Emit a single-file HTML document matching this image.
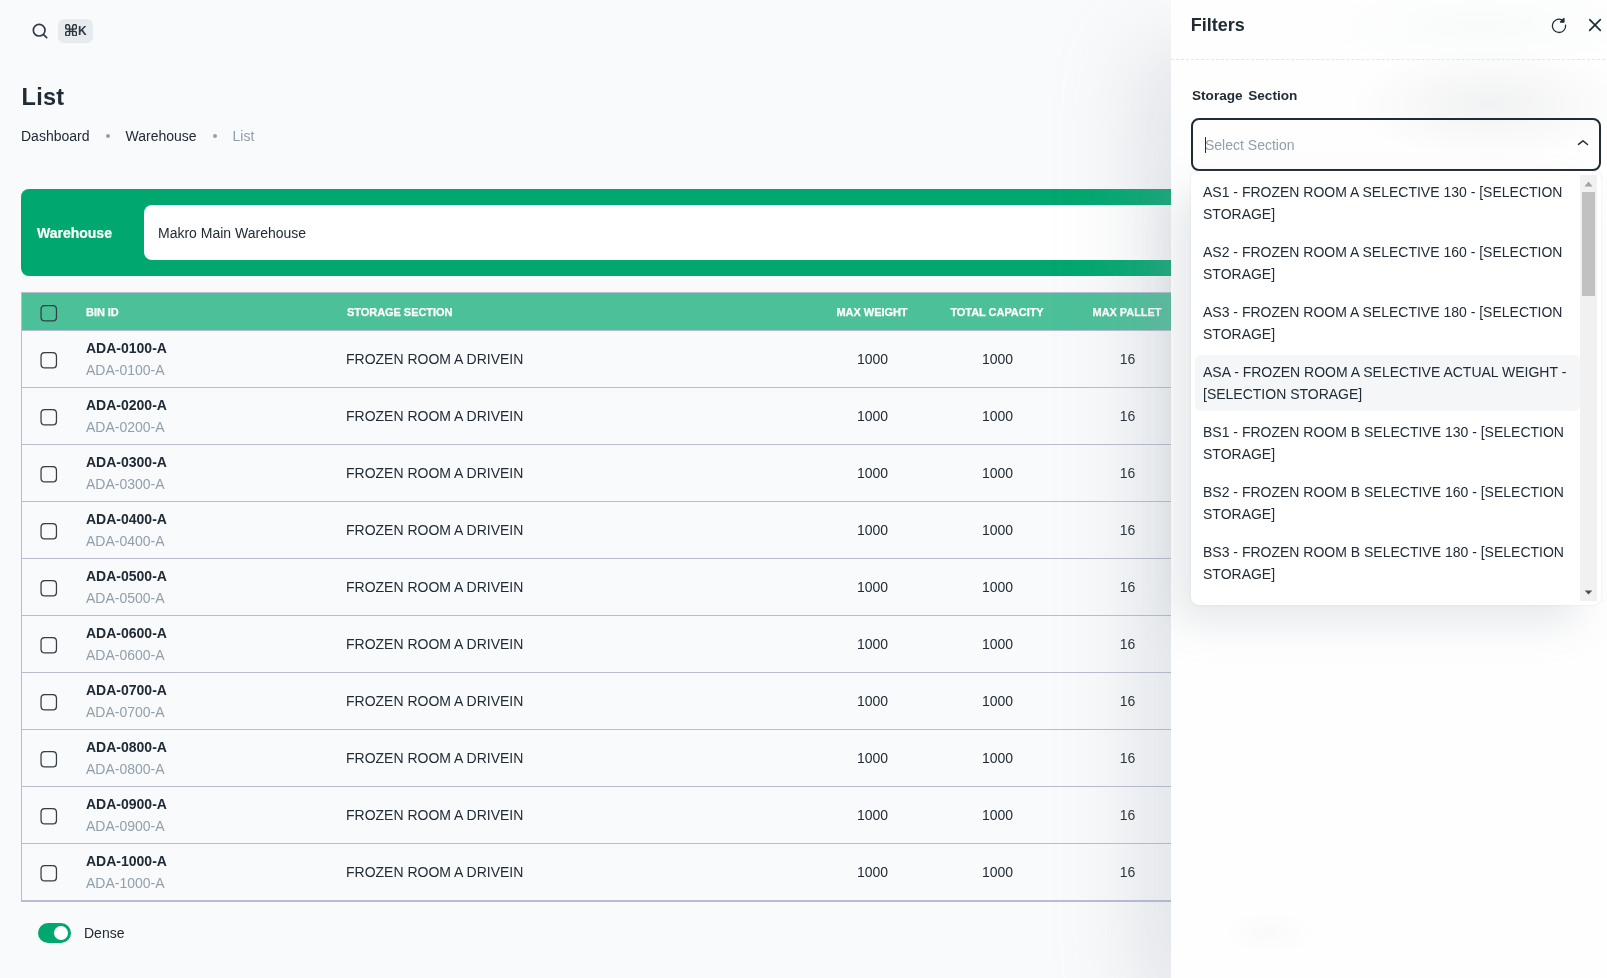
<!DOCTYPE html>
<html lang="en"><head><meta charset="utf-8"><title>List</title>
<style>
*{box-sizing:border-box;margin:0;padding:0}
html,body{width:1607px;height:978px;overflow:hidden}
body{position:relative;background:#F9FAFB;font-family:"Liberation Sans",sans-serif;font-size:14px;color:#212B36;-webkit-font-smoothing:antialiased}
#root{position:absolute;left:0;top:0;width:1607px;height:978px;overflow:hidden;will-change:transform}
.abs,.t{position:absolute;white-space:nowrap}
.t{line-height:22px;height:22px}
/* top bar */
.search{position:absolute;left:30px;top:21px;width:20px;height:20px;fill:#2F3944}
.kbd{position:absolute;left:58px;top:19px;width:35px;height:24px;border-radius:6px;background:#E8EBEE}
.kbd svg{position:absolute;left:6.8px;top:4.9px;width:12.2px;height:12.5px}
.kbd span{position:absolute;left:20px;top:0;line-height:24px;font-size:12px;font-weight:700;color:#2F3944}
h1{position:absolute;left:21.6px;top:79.2px;letter-spacing:0.22px;font-size:23.5px;line-height:36px;font-weight:700;color:#212B36}
.bc{top:125px;color:#212B36}
.dot{position:absolute;top:134px;width:4px;height:4px;border-radius:50%;background:#919EAB}
/* green bar */
.gbar{position:absolute;left:21px;top:189px;width:1400px;height:87px;border-radius:8px;background:#00A76F}
.gbar .lbl{position:absolute;left:16px;top:33px;line-height:22px;font-weight:700;color:#fff;-webkit-text-stroke:0.2px #fff}
.gbar .inp{position:absolute;left:123px;top:16px;width:1300px;height:55px;border-radius:8px;background:#fff}
.gbar .inp span{position:absolute;left:14px;top:17px;line-height:22px;color:#212B36}
/* table */
.tbl{position:absolute;left:21px;top:292px;width:1400px;height:610px;border:1px solid #BABDD2;border-right:0}
.thead{position:absolute;left:22px;top:293px;width:1400px;height:37px;background:#4BC099}
.hline{position:absolute;left:22px;width:1400px;height:1px;background:#BABDD2}
.th{position:absolute;top:301px;line-height:22px;font-size:11px;font-weight:700;color:#fff;white-space:nowrap;-webkit-text-stroke:0.25px #fff;letter-spacing:-0.05px}
.row{position:absolute;left:0;width:1400px;height:57px}
.row::after{content:"";position:absolute;left:22px;right:0;bottom:0;height:1px;background:#BABDD2}
.cb{position:absolute;left:38px;width:20px;height:20px;fill:#353D47}
.row .cb{top:19px}
.b1{left:86px;top:6px;font-weight:700}
.b2{left:86px;top:28px;color:#919EAB}
.sec{left:346px;top:17px}
.n{top:17px;width:100px;text-align:center}
.n1{left:822.5px}.n2{left:947.5px}.n3{left:1077.5px}
/* dense */
.sw{position:absolute;left:38px;top:923px;width:33px;height:20px;border-radius:10px;background:#00A76F}
.sw i{position:absolute;left:16px;top:3px;width:14px;height:14px;border-radius:50%;background:#fff}
.dense{left:84px;top:922px}
/* drawer */
.drawer{position:absolute;left:1171px;top:0;width:449px;height:978px;background:#FEFEFE;box-shadow:-40px 40px 80px -8px rgba(145,158,171,0.24);
 background-image:radial-gradient(ellipse 140px 56px at 320px 104px, rgba(110,120,130,0.09), rgba(110,120,130,0.06) 35%, rgba(110,120,130,0) 100%),radial-gradient(ellipse 160px 45px at 310px 26px, rgba(120,170,170,0.04), rgba(120,170,170,0) 100%),radial-gradient(ellipse 45px 22px at 99px 933px, rgba(110,120,130,0.03), rgba(110,120,130,0) 100%)}
.drawer h6{position:absolute;left:19.8px;top:11px;font-size:18px;line-height:28px;font-weight:700;color:#212B36}
.dash{position:absolute;left:0;top:59px;width:449px;height:0;border-top:1px dashed #E3E7EA}
.ico{position:absolute;fill:none;stroke:#27303A;stroke-linecap:round;stroke-linejoin:round}
.icf{position:absolute;fill:#212B36}
.sslab{left:21px;top:84.5px;font-weight:700;font-size:13.6px;word-spacing:1.8px}
.sel{position:absolute;left:20px;top:118px;width:410px;height:53px;border:2px solid #212B36;border-radius:8px}
.caret{position:absolute;left:34px;top:137px;width:1px;height:16px;background:#212B36}
.ph{left:34px;top:134px;color:#919EAB}
.paper{position:absolute;left:20px;top:171px;width:410px;height:434px;border-radius:8px;background:#fff;
 box-shadow:0 0 2px 0 rgba(145,158,171,0.24),-20px 20px 40px -4px rgba(145,158,171,0.24)}
.lb{position:absolute;left:4px;top:4px;width:385px;height:426px;overflow:hidden}
.opt{position:absolute;left:0;width:385px;height:56px;padding:6px 8px;border-radius:6px;line-height:22px;white-space:nowrap;color:#212B36}
.opt.hov{background:#F4F6F8}
.sb{position:absolute;left:389px;top:4px;width:17px;height:426px;background:#F1F1F1}
.sb .th2{position:absolute;left:2px;top:17px;width:13px;height:104px;background:#C1C1C1}
.sb svg{position:absolute;left:0;width:17px;height:17px}
</style></head><body><div id="root">
<svg class="search" viewBox="0 0 24 24"><path d="m20.71 19.29l-3.4-3.39A7.92 7.92 0 0 0 19 11a8 8 0 1 0-8 8a7.92 7.92 0 0 0 4.9-1.69l3.39 3.4a1 1 0 0 0 1.42 0a1 1 0 0 0 0-1.42ZM5 11a6 6 0 1 1 6 6a6 6 0 0 1-6-6Z"/></svg>
<div class="kbd"><svg viewBox="0 0 12.2 12.5" fill="none" stroke="#2A343E" stroke-width="1.45"><path d="M4.6 2.85a2 2.25 0 1 0-2 2.25H9.6a2 2.25 0 1 0-2-2.25V9.65a2 2.25 0 1 0 2-2.25H2.6a2 2.25 0 1 0 2 2.25Z"/></svg><span>K</span></div>
<h1>List</h1>
<div class="t bc" style="left:21px">Dashboard</div><i class="dot" style="left:106px"></i>
<div class="t bc" style="left:125.5px">Warehouse</div><i class="dot" style="left:213px"></i>
<div class="t bc" style="left:232.5px;color:#919EAB">List</div>

<div class="gbar"><div class="lbl">Warehouse</div><div class="inp"><span>Makro Main Warehouse</span></div></div>

<div class="tbl"></div>
<div class="thead"></div>
<div class="hline" style="top:330px"></div>
<svg class="cb" style="top:303px" viewBox="0 0 24 24"><path d="M17.9 2.318A5 5 0 0 1 22.895 7.1l.005.217v10a5 5 0 0 1-4.783 4.995l-.217.005h-10a5 5 0 0 1-4.995-4.783l-.005-.217v-10a5 5 0 0 1 4.783-4.996l.217-.004h10Zm-.5 1.5h-9a4 4 0 0 0-4 4v9a4 4 0 0 0 4 4h9a4 4 0 0 0 4-4v-9a4 4 0 0 0-4-4Z"/></svg>
<div class="th" style="left:86px">BIN ID</div>
<div class="th" style="left:347px">STORAGE SECTION</div>
<div class="th" style="left:822px;width:100px;text-align:center">MAX WEIGHT</div>
<div class="th" style="left:947px;width:100px;text-align:center">TOTAL CAPACITY</div>
<div class="th" style="left:1077px;width:100px;text-align:center">MAX PALLET</div>
<div class="row" style="top:331px">
<svg class="cb" viewBox="0 0 24 24"><path d="M17.9 2.318A5 5 0 0 1 22.895 7.1l.005.217v10a5 5 0 0 1-4.783 4.995l-.217.005h-10a5 5 0 0 1-4.995-4.783l-.005-.217v-10a5 5 0 0 1 4.783-4.996l.217-.004h10Zm-.5 1.5h-9a4 4 0 0 0-4 4v9a4 4 0 0 0 4 4h9a4 4 0 0 0 4-4v-9a4 4 0 0 0-4-4Z"/></svg>
<div class="t b1">ADA-0100-A</div><div class="t b2">ADA-0100-A</div>
<div class="t sec">FROZEN ROOM A DRIVEIN</div>
<div class="t n n1">1000</div><div class="t n n2">1000</div><div class="t n n3">16</div>
</div>
<div class="row" style="top:388px">
<svg class="cb" viewBox="0 0 24 24"><path d="M17.9 2.318A5 5 0 0 1 22.895 7.1l.005.217v10a5 5 0 0 1-4.783 4.995l-.217.005h-10a5 5 0 0 1-4.995-4.783l-.005-.217v-10a5 5 0 0 1 4.783-4.996l.217-.004h10Zm-.5 1.5h-9a4 4 0 0 0-4 4v9a4 4 0 0 0 4 4h9a4 4 0 0 0 4-4v-9a4 4 0 0 0-4-4Z"/></svg>
<div class="t b1">ADA-0200-A</div><div class="t b2">ADA-0200-A</div>
<div class="t sec">FROZEN ROOM A DRIVEIN</div>
<div class="t n n1">1000</div><div class="t n n2">1000</div><div class="t n n3">16</div>
</div>
<div class="row" style="top:445px">
<svg class="cb" viewBox="0 0 24 24"><path d="M17.9 2.318A5 5 0 0 1 22.895 7.1l.005.217v10a5 5 0 0 1-4.783 4.995l-.217.005h-10a5 5 0 0 1-4.995-4.783l-.005-.217v-10a5 5 0 0 1 4.783-4.996l.217-.004h10Zm-.5 1.5h-9a4 4 0 0 0-4 4v9a4 4 0 0 0 4 4h9a4 4 0 0 0 4-4v-9a4 4 0 0 0-4-4Z"/></svg>
<div class="t b1">ADA-0300-A</div><div class="t b2">ADA-0300-A</div>
<div class="t sec">FROZEN ROOM A DRIVEIN</div>
<div class="t n n1">1000</div><div class="t n n2">1000</div><div class="t n n3">16</div>
</div>
<div class="row" style="top:502px">
<svg class="cb" viewBox="0 0 24 24"><path d="M17.9 2.318A5 5 0 0 1 22.895 7.1l.005.217v10a5 5 0 0 1-4.783 4.995l-.217.005h-10a5 5 0 0 1-4.995-4.783l-.005-.217v-10a5 5 0 0 1 4.783-4.996l.217-.004h10Zm-.5 1.5h-9a4 4 0 0 0-4 4v9a4 4 0 0 0 4 4h9a4 4 0 0 0 4-4v-9a4 4 0 0 0-4-4Z"/></svg>
<div class="t b1">ADA-0400-A</div><div class="t b2">ADA-0400-A</div>
<div class="t sec">FROZEN ROOM A DRIVEIN</div>
<div class="t n n1">1000</div><div class="t n n2">1000</div><div class="t n n3">16</div>
</div>
<div class="row" style="top:559px">
<svg class="cb" viewBox="0 0 24 24"><path d="M17.9 2.318A5 5 0 0 1 22.895 7.1l.005.217v10a5 5 0 0 1-4.783 4.995l-.217.005h-10a5 5 0 0 1-4.995-4.783l-.005-.217v-10a5 5 0 0 1 4.783-4.996l.217-.004h10Zm-.5 1.5h-9a4 4 0 0 0-4 4v9a4 4 0 0 0 4 4h9a4 4 0 0 0 4-4v-9a4 4 0 0 0-4-4Z"/></svg>
<div class="t b1">ADA-0500-A</div><div class="t b2">ADA-0500-A</div>
<div class="t sec">FROZEN ROOM A DRIVEIN</div>
<div class="t n n1">1000</div><div class="t n n2">1000</div><div class="t n n3">16</div>
</div>
<div class="row" style="top:616px">
<svg class="cb" viewBox="0 0 24 24"><path d="M17.9 2.318A5 5 0 0 1 22.895 7.1l.005.217v10a5 5 0 0 1-4.783 4.995l-.217.005h-10a5 5 0 0 1-4.995-4.783l-.005-.217v-10a5 5 0 0 1 4.783-4.996l.217-.004h10Zm-.5 1.5h-9a4 4 0 0 0-4 4v9a4 4 0 0 0 4 4h9a4 4 0 0 0 4-4v-9a4 4 0 0 0-4-4Z"/></svg>
<div class="t b1">ADA-0600-A</div><div class="t b2">ADA-0600-A</div>
<div class="t sec">FROZEN ROOM A DRIVEIN</div>
<div class="t n n1">1000</div><div class="t n n2">1000</div><div class="t n n3">16</div>
</div>
<div class="row" style="top:673px">
<svg class="cb" viewBox="0 0 24 24"><path d="M17.9 2.318A5 5 0 0 1 22.895 7.1l.005.217v10a5 5 0 0 1-4.783 4.995l-.217.005h-10a5 5 0 0 1-4.995-4.783l-.005-.217v-10a5 5 0 0 1 4.783-4.996l.217-.004h10Zm-.5 1.5h-9a4 4 0 0 0-4 4v9a4 4 0 0 0 4 4h9a4 4 0 0 0 4-4v-9a4 4 0 0 0-4-4Z"/></svg>
<div class="t b1">ADA-0700-A</div><div class="t b2">ADA-0700-A</div>
<div class="t sec">FROZEN ROOM A DRIVEIN</div>
<div class="t n n1">1000</div><div class="t n n2">1000</div><div class="t n n3">16</div>
</div>
<div class="row" style="top:730px">
<svg class="cb" viewBox="0 0 24 24"><path d="M17.9 2.318A5 5 0 0 1 22.895 7.1l.005.217v10a5 5 0 0 1-4.783 4.995l-.217.005h-10a5 5 0 0 1-4.995-4.783l-.005-.217v-10a5 5 0 0 1 4.783-4.996l.217-.004h10Zm-.5 1.5h-9a4 4 0 0 0-4 4v9a4 4 0 0 0 4 4h9a4 4 0 0 0 4-4v-9a4 4 0 0 0-4-4Z"/></svg>
<div class="t b1">ADA-0800-A</div><div class="t b2">ADA-0800-A</div>
<div class="t sec">FROZEN ROOM A DRIVEIN</div>
<div class="t n n1">1000</div><div class="t n n2">1000</div><div class="t n n3">16</div>
</div>
<div class="row" style="top:787px">
<svg class="cb" viewBox="0 0 24 24"><path d="M17.9 2.318A5 5 0 0 1 22.895 7.1l.005.217v10a5 5 0 0 1-4.783 4.995l-.217.005h-10a5 5 0 0 1-4.995-4.783l-.005-.217v-10a5 5 0 0 1 4.783-4.996l.217-.004h10Zm-.5 1.5h-9a4 4 0 0 0-4 4v9a4 4 0 0 0 4 4h9a4 4 0 0 0 4-4v-9a4 4 0 0 0-4-4Z"/></svg>
<div class="t b1">ADA-0900-A</div><div class="t b2">ADA-0900-A</div>
<div class="t sec">FROZEN ROOM A DRIVEIN</div>
<div class="t n n1">1000</div><div class="t n n2">1000</div><div class="t n n3">16</div>
</div>
<div class="row" style="top:844px">
<svg class="cb" viewBox="0 0 24 24"><path d="M17.9 2.318A5 5 0 0 1 22.895 7.1l.005.217v10a5 5 0 0 1-4.783 4.995l-.217.005h-10a5 5 0 0 1-4.995-4.783l-.005-.217v-10a5 5 0 0 1 4.783-4.996l.217-.004h10Zm-.5 1.5h-9a4 4 0 0 0-4 4v9a4 4 0 0 0 4 4h9a4 4 0 0 0 4-4v-9a4 4 0 0 0-4-4Z"/></svg>
<div class="t b1">ADA-1000-A</div><div class="t b2">ADA-1000-A</div>
<div class="t sec">FROZEN ROOM A DRIVEIN</div>
<div class="t n n1">1000</div><div class="t n n2">1000</div><div class="t n n3">16</div>
</div>

<div class="sw"><i></i></div>
<div class="t dense">Dense</div>

<div class="drawer">
<h6>Filters</h6>
<svg class="icf" style="left:378px;top:15px;width:20px;height:20px" viewBox="0 0 24 24"><path d="M18.258 3.508a.75.75 0 0 1 .463.693v4.243a.75.75 0 0 1-.75.75h-4.243a.75.75 0 0 1-.53-1.28L14.8 6.311a7.25 7.25 0 1 0 4.393 5.783a.75.75 0 0 1 1.488-.187A8.75 8.75 0 1 1 15.93 5.18l1.51-1.51a.75.75 0 0 1 .817-.162"/></svg>
<svg class="icf" style="left:414px;top:15px;width:20px;height:20px" viewBox="0 0 24 24"><path d="m12 13.414l5.657 5.657a1 1 0 0 0 1.414-1.414L13.414 12l5.657-5.657a1 1 0 0 0-1.414-1.414L12 10.586L6.343 4.929A1 1 0 0 0 4.93 6.343L10.586 12l-5.657 5.657a1 1 0 1 0 1.414 1.414z"/></svg>
<div class="dash"></div>
<div class="t sslab">Storage Section</div>
<div class="sel"></div>
<div class="caret"></div>
<div class="t ph">Select Section</div>
<svg class="icf" style="left:403px;top:134.3px;width:18px;height:18px;transform:rotate(180deg)" viewBox="0 0 24 24"><path d="M12 16a1 1 0 0 1-.64-.23l-6-5a1 1 0 1 1 1.28-1.54L12 13.710l5.360-4.320a1 1 0 0 1 1.410.150a1 1 0 0 1-.140 1.460l-6 4.830A1 1 0 0 1 12 16Z"/></svg>
<div class="paper">
<div class="lb">
<div class="opt" style="top:0px"><div>AS1 - FROZEN ROOM A SELECTIVE 130 - [SELECTION</div><div>STORAGE]</div></div>
<div class="opt" style="top:60px"><div>AS2 - FROZEN ROOM A SELECTIVE 160 - [SELECTION</div><div>STORAGE]</div></div>
<div class="opt" style="top:120px"><div>AS3 - FROZEN ROOM A SELECTIVE 180 - [SELECTION</div><div>STORAGE]</div></div>
<div class="opt hov" style="top:180px"><div>ASA - FROZEN ROOM A SELECTIVE ACTUAL WEIGHT -</div><div>[SELECTION STORAGE]</div></div>
<div class="opt" style="top:240px"><div>BS1 - FROZEN ROOM B SELECTIVE 130 - [SELECTION</div><div>STORAGE]</div></div>
<div class="opt" style="top:300px"><div>BS2 - FROZEN ROOM B SELECTIVE 160 - [SELECTION</div><div>STORAGE]</div></div>
<div class="opt" style="top:360px"><div>BS3 - FROZEN ROOM B SELECTIVE 180 - [SELECTION</div><div>STORAGE]</div></div>
<div class="opt" style="top:420px"></div>
</div>
<div class="sb"><svg style="top:0" viewBox="0 0 17 17"><path d="M4.5 11.5L8.5 6.5L12.5 11.5Z" fill="#A3A3A3"/></svg><div class="th2"></div><svg style="bottom:0" viewBox="0 0 17 17"><path d="M4.7 6.5L8.5 10.5L12.3 6.5Z" fill="#505050"/></svg></div>
</div>
</div>
</div></body></html>
